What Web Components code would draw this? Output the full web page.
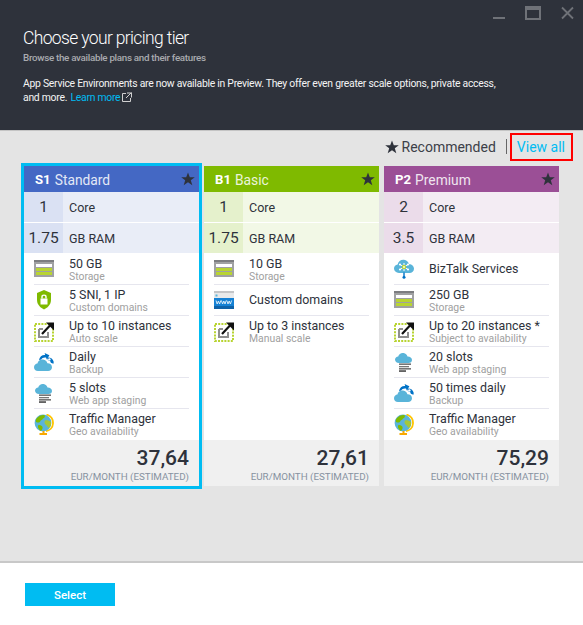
<!DOCTYPE html>
<html>
<head>
<meta charset="utf-8">
<title>Choose your pricing tier</title>
<style>
  html, body { margin: 0; height: 100%; }
  body { font-family: Roboto, "Open Sans", sans-serif; color: #2e323b; }
</style>
</head>
<body>
<pricing-blade>
  <blade-header slot="header" title-text="Choose your pricing tier" subtitle="Browse the available plans and their features">App Service Environments are now available in Preview. They offer even greater scale options, private access, and more.</blade-header>
  <tier-toolbar slot="toolbar"></tier-toolbar>

  <tier-card slot="cards" code="S1" name="Standard" color="#4468c4" tint="#e9edf7" shade="#dae1f3" selected>
    <spec-row num="1" label="Core"></spec-row>
    <spec-row num="1.75" label="GB RAM"></spec-row>
    <feature-row icon="storage" main="50 GB" sub="Storage"></feature-row>
    <feature-row icon="shield" main="5 SNI, 1 IP" sub="Custom domains"></feature-row>
    <feature-row icon="scale" main="Up to 10 instances" sub="Auto scale"></feature-row>
    <feature-row icon="backup" main="Daily" sub="Backup"></feature-row>
    <feature-row icon="slots" main="5 slots" sub="Web app staging"></feature-row>
    <feature-row icon="globe" main="Traffic Manager" sub="Geo availability" last></feature-row>
    <span slot="price">37,64</span>
  </tier-card>

  <tier-card slot="cards" code="B1" name="Basic" color="#7fba00" tint="#f2f8e6" shade="#e5f1cc">
    <spec-row num="1" label="Core"></spec-row>
    <spec-row num="1.75" label="GB RAM"></spec-row>
    <feature-row icon="storage" main="10 GB" sub="Storage"></feature-row>
    <feature-row icon="www" main="Custom domains"></feature-row>
    <feature-row icon="scale" main="Up to 3 instances" sub="Manual scale" last></feature-row>
    <span slot="price">27,61</span>
  </tier-card>

  <tier-card slot="cards" code="P2" name="Premium" color="#9b4f96" tint="#f3ecf3" shade="#ebdcea">
    <spec-row num="2" label="Core"></spec-row>
    <spec-row num="3.5" label="GB RAM"></spec-row>
    <feature-row icon="biztalk" main="BizTalk Services"></feature-row>
    <feature-row icon="storage" main="250 GB" sub="Storage"></feature-row>
    <feature-row icon="scale" main="Up to 20 instances *" sub="Subject to availability"></feature-row>
    <feature-row icon="slots" main="20 slots" sub="Web app staging"></feature-row>
    <feature-row icon="backup" main="50 times daily" sub="Backup"></feature-row>
    <feature-row icon="globe" main="Traffic Manager" sub="Geo availability" last></feature-row>
    <span slot="price">75,29</span>
  </tier-card>

  <select-bar slot="footer"></select-bar>
</pricing-blade>

<script>
// Shared star path, used by the toolbar and the card headers
const STAR = 'M7 0.5 8.8 5.2H13.8L9.8 8.3 11.3 13.3 7 10.3 2.7 13.3 4.2 8.3 0.2 5.2H5.2Z';

const ICONS = {
  storage: `
    <rect x="0" y="1" width="20" height="17" fill="#a0a1a3"/>
    <rect x="0" y="1" width="20" height="2" fill="#7c7d80"/>
    <rect x="2" y="5" width="16" height="3" fill="#fff"/>
    <rect x="2" y="9" width="16" height="3" fill="#b8d432"/>
    <rect x="2" y="13" width="16" height="3" fill="#b8d432"/>`,
  shield: `
    <path d="M10 0 17 3V10C17 15 13 18 10 19.5 7 18 3 15 3 10V3Z" fill="#7fba00"/>
    <rect x="6.5" y="8.5" width="7" height="6" fill="#fff"/>
    <path d="M8 8.5V6.8C8 4.6 12 4.6 12 6.8V8.5" fill="none" stroke="#fff" stroke-width="1.4"/>`,
  scale: `
    <rect x="1" y="3" width="18" height="17" fill="none" stroke="#b8d432" stroke-width="2" stroke-dasharray="2 1.2"/>
    <path d="M5 8V16H14V11" fill="none" stroke="#8f8f8f" stroke-width="2"/>
    <path d="M5 8H9" stroke="#8f8f8f" stroke-width="2"/>
    <path d="M8 13 16 4.5" stroke="#111" stroke-width="2.2"/>
    <path d="M12 1.5H20V9.5Z" fill="#111"/>`,
  backup: `
    <path d="M4 19C1.5 19 0 17.3 0 15.2 0 13 1.6 11.6 3.4 11.4 4.2 8.6 6.6 7 9.2 7.6 11.4 8 12.8 9.4 13.4 11.2 15.6 11 18 12.6 18 15.2 18 17.4 16.4 19 14 19Z" fill="#59b4d9"/>
    <path d="M5 8C5.6 4.4 8.4 2.6 11.2 3L10.6 1 15.4 3.2 12.8 7.6 12 5.6C9.6 5.2 8 6.2 7.2 7.6Z" fill="#0072c6"/>
    <path d="M13 5.6C16 5 19 6.6 19.6 9.6 19.8 10.6 19.6 11.2 19.4 11.8L16.8 10.8C16.8 9.4 15.6 8.2 14 8.2Z" fill="#0072c6"/>
    <circle cx="15.4" cy="7.4" r="1.2" fill="#fff"/>`,
  slots: `
    <path d="M5 11C2.5 11 1 9.5 1 7.6 1 5.7 2.5 4.5 4.2 4.4 5 2 7.2 0.6 9.6 1.1 11.6 1.5 13 2.9 13.5 4.6 15.6 4.4 18 5.8 18 8 18 9.8 16.6 11 14.5 11Z" fill="#59b4d9"/>
    <rect x="5" y="11.5" width="12" height="1.3" fill="#555"/>
    <rect x="5" y="14" width="10" height="1.3" fill="#777"/>
    <rect x="5" y="16.2" width="12" height="1.3" fill="#555"/>
    <rect x="5" y="18.4" width="7" height="1.3" fill="#222"/>`,
  globe: `
    <path d="M12.5 0.5C17 2 19.2 5.6 19 9.5 18.8 13.6 15.6 16.5 12 17" fill="none" stroke="#ffc400" stroke-width="1.8"/>
    <circle cx="9" cy="9" r="8.4" fill="#59b4d9"/>
    <path d="M3 4C5 1.8 8 0.6 10.5 1 11.5 2.5 10.5 4 9 4.5 8.5 6 6.5 6 6.2 7.5 5.5 9 3.6 8.6 2 8 1.6 6.6 2 5 3 4Z" fill="#7fba00"/>
    <path d="M11 6.5C13 6 15.5 6.6 17 8 17.4 10.6 16.6 12.6 15 14 13.4 13.6 13.4 11.6 12 11 10.6 10 10 8 11 6.5Z" fill="#a4c83a"/>
    <path d="M4.5 11C6.4 10.6 8.2 11.6 8.6 13.2 8.6 14.8 8 16 7 17 5.4 16.4 4.8 14.6 4 13.4 3.8 12.4 4 11.6 4.5 11Z" fill="#7fba00"/>
    <path d="M9.5 17V19M5.5 20H13" stroke="#f8a800" stroke-width="2"/>`,
  www: `
    <rect x="0" y="1" width="20" height="18" fill="#1581d4"/>
    <rect x="0" y="1" width="20" height="2" fill="#c4c5c7"/>
    <rect x="0" y="3" width="20" height="5" fill="#e8e9ea"/>
    <rect x="1.5" y="4.5" width="2" height="2" fill="#59b4d9"/>
    <rect x="0" y="16" width="20" height="3" fill="#0f62a8"/>
    <path d="M2 10.5 3.2 14 4.4 11 5.6 14 6.8 10.5M7.4 10.5 8.6 14 9.8 11 11 14 12.2 10.5M12.8 10.5 14 14 15.2 11 16.4 14 17.6 10.5" fill="none" stroke="#e8f3fb" stroke-width="0.9"/>`,
  biztalk: `
    <path d="M5 14C2 14 0 12 0 9.6 0 7.4 1.6 5.8 3.6 5.6 4.4 2.4 7 0.4 10 0.8 12.6 1.2 14.4 3 15 5.2 17.6 5 20 7 20 9.8 20 12.2 18 14 15.5 14Z" fill="#59b4d9"/>
    <path d="M10 4V12M6 5.5 14 10.5M14 5.5 6 10.5" stroke="#fff" stroke-width="1"/>
    <circle cx="10" cy="8" r="2.2" fill="#b8d432"/>
    <circle cx="10" cy="8" r="0.9" fill="#fff"/>
    <circle cx="6" cy="5.5" r="1.1" fill="#fff"/><circle cx="14" cy="5.5" r="1.1" fill="#fff"/>
    <circle cx="6" cy="10.5" r="1.1" fill="#fff"/><circle cx="14" cy="10.5" r="1.1" fill="#fff"/>
    <rect x="9.3" y="13.5" width="1.4" height="4" fill="#0072c6"/>
    <circle cx="10" cy="18.3" r="1.5" fill="#0072c6"/>`
};

class PricingBlade extends HTMLElement {
  connectedCallback() {
    this.attachShadow({ mode: 'open' });
    this.shadowRoot.innerHTML = `
      <style>
        :host { display: flex; flex-direction: column; height: 625px; width: 583px; overflow: hidden; }
        .body { flex: 1; background: #e4e4e4; border-top: 1px solid #c4c4c4; border-bottom: 2px solid #c8c8c8; }
        .cards { display: flex; gap: 5px; padding: 5px 0 0 24px; }
      </style>
      <slot name="header"></slot>
      <div class="body">
        <slot name="toolbar"></slot>
        <div class="cards"><slot name="cards"></slot></div>
      </div>
      <slot name="footer"></slot>
    `;
  }
}

class BladeHeader extends HTMLElement {
  connectedCallback() {
    this.attachShadow({ mode: 'open' });
    this.shadowRoot.innerHTML = `
      <style>
        :host { display: block; height: 130px; box-sizing: border-box; background: #2e323b; color: #fff; padding: 0 0 0 23px; }
        .controls { display: flex; justify-content: flex-end; gap: 20px; height: 26px; padding: 6px 8px 0 0; box-sizing: border-box; }
        .controls svg { display: block; }
        h1 { margin: 0; font-size: 17.5px; font-weight: 300; line-height: 24px; letter-spacing: -0.65px; }
        .sub { font-size: 9.8px; font-weight: 500; color: #a9abaf; line-height: 14px; margin-top: 1px; letter-spacing: -0.3px; }
        .note { font-size: 10.4px; line-height: 14px; margin-top: 12px; width: 480px; color: #f4f4f4; letter-spacing: -0.27px; }
        a { color: #00bcf2; text-decoration: none; margin-left: 1px; }
        .ext { vertical-align: -1px; margin-left: 2px; }
      </style>
      <div class="controls">
        <svg width="14" height="14" viewBox="0 0 14 14"><rect x="2" y="11" width="12" height="2" fill="#6f7278"/></svg>
        <svg width="16" height="14" viewBox="0 0 16 14"><path d="M1 1H15V13H1Z" fill="none" stroke="#6f7278" stroke-width="2"/><rect x="1" y="1" width="14" height="3" fill="#6f7278"/></svg>
        <svg width="14" height="14" viewBox="0 0 14 14"><path d="M1 1.5 12 12.5M12 1.5 1 12.5" stroke="#6f7278" stroke-width="1.8"/></svg>
      </div>
      <h1>${this.getAttribute('title-text')}</h1>
      <div class="sub">${this.getAttribute('subtitle')}</div>
      <div class="note"><slot></slot> <a href="#">Learn more</a><svg class="ext" width="10" height="10" viewBox="0 0 10 10"><path d="M4 1.5H.5V9.5H8.5V6M5 1H9.5V5.5M9.5 .5 4 6" fill="none" stroke="#d0d0d0"/></svg></div>
    `;
  }
}

class TierToolbar extends HTMLElement {
  connectedCallback() {
    this.attachShadow({ mode: 'open' });
    this.shadowRoot.innerHTML = `
      <style>
        :host { display: flex; align-items: center; justify-content: flex-end; height: 30px; box-sizing: border-box; padding: 1px 10px 0 0; font-size: 14px; color: #3c4048; }
        svg { margin-right: 3px; }
        .sep { width: 1px; height: 15px; background: #666; margin: 0 3px 0 10px; }
        a { display: flex; align-items: center; height: 28px; box-sizing: border-box; border: 2px solid #f00; padding: 0 6px 0 5px; color: #00bcf2; text-decoration: none; }
      </style>
      <svg width="14" height="14" viewBox="0 0 14 14"><path d="${STAR}" fill="#2e323b"/></svg>
      <span>Recommended</span>
      <span class="sep"></span>
      <a href="#">View all</a>
    `;
  }
}

class TierCard extends HTMLElement {
  connectedCallback() {
    this.style.setProperty('--tint', this.getAttribute('tint'));
    this.style.setProperty('--shade', this.getAttribute('shade'));
    this.attachShadow({ mode: 'open' });
    this.shadowRoot.innerHTML = `
      <style>
        :host { display: flex; flex-direction: column; width: 175px; height: 320px; background: #fff; }
        :host([selected]) { outline: 3px solid #00bcf2; }
        .head { display: flex; align-items: center; height: 26px; box-sizing: border-box; padding: 1px 4px 0 11px; background: ${this.getAttribute('color')}; color: #fff; font-size: 13.8px; }
        .code { font-weight: 700; font-size: 13.2px; margin-right: 4px; }
        .name { flex: 1; opacity: .85; }
        svg { margin-top: -2px; }
        .rows { flex: 1; }
        .foot { height: 46px; box-sizing: border-box; background: #f0f0f0; padding: 5px 10px 0 0; text-align: right; }
        .price { font-size: 21px; font-weight: 500; line-height: 26px; color: #2e323b; }
        .unit { font-size: 9.8px; line-height: 12px; color: #8792a0; }
      </style>
      <div class="head">
        <span class="code">${this.getAttribute('code')}</span>
        <span class="name">${this.getAttribute('name')}</span>
        <svg width="14" height="14" viewBox="0 0 14 14"><path d="${STAR}" fill="#2e323b"/></svg>
      </div>
      <div class="rows"><slot></slot></div>
      <div class="foot">
        <div class="price"><slot name="price"></slot></div>
        <div class="unit">EUR/MONTH (ESTIMATED)</div>
      </div>
    `;
  }
}

class SpecRow extends HTMLElement {
  connectedCallback() {
    this.attachShadow({ mode: 'open' });
    this.shadowRoot.innerHTML = `
      <style>
        :host { display: flex; height: 30px; margin-bottom: 1px; background: var(--tint); font-size: 12.5px; color: #2e323b; align-items: stretch; }
        .num { width: 39px; flex: none; display: flex; align-items: center; justify-content: center; background: var(--shade); font-size: 15.5px; }
        .label { display: flex; align-items: center; padding-left: 6px; }
      </style>
      <div class="num">${this.getAttribute('num')}</div>
      <div class="label">${this.getAttribute('label')}</div>
    `;
  }
}

class FeatureRow extends HTMLElement {
  connectedCallback() {
    const sub = this.getAttribute('sub');
    this.attachShadow({ mode: 'open' });
    this.shadowRoot.innerHTML = `
      <style>
        :host { display: flex; align-items: center; height: 31px; box-sizing: border-box; margin: 0 10px; border-bottom: 1px solid #e6e6ee; }
        :host([last]) { border-bottom-color: transparent; }
        svg { flex: none; margin-right: 15px; }
        .two { padding-top: 1px; }
        .one { padding-bottom: 1px; }
        .main { font-size: 12.4px; line-height: 13.5px; color: #2e323b; }
        .sub { font-size: 10.4px; line-height: 11.5px; color: #a0a0a0; }
      </style>
      <svg width="20" height="21" viewBox="0 0 20 21">${ICONS[this.getAttribute('icon')]}</svg>
      <div class="${sub ? 'two' : 'one'}">
        <div class="main">${this.getAttribute('main')}</div>
        ${sub ? `<div class="sub">${sub}</div>` : ''}
      </div>
    `;
  }
}

class SelectBar extends HTMLElement {
  connectedCallback() {
    this.attachShadow({ mode: 'open' });
    this.shadowRoot.innerHTML = `
      <style>
        :host { display: block; height: 62px; box-sizing: border-box; background: #fff; padding: 20px 0 0 25px; }
        button { display: block; width: 90px; height: 23px; padding: 0; border: 0; background: #00bcf2; color: #fff; font: 500 11.5px Roboto, "Open Sans", sans-serif; }
      </style>
      <button>Select</button>
    `;
  }
}

customElements.define('pricing-blade', PricingBlade);
customElements.define('blade-header', BladeHeader);
customElements.define('tier-toolbar', TierToolbar);
customElements.define('tier-card', TierCard);
customElements.define('spec-row', SpecRow);
customElements.define('feature-row', FeatureRow);
customElements.define('select-bar', SelectBar);
</script>
</body>
</html>
